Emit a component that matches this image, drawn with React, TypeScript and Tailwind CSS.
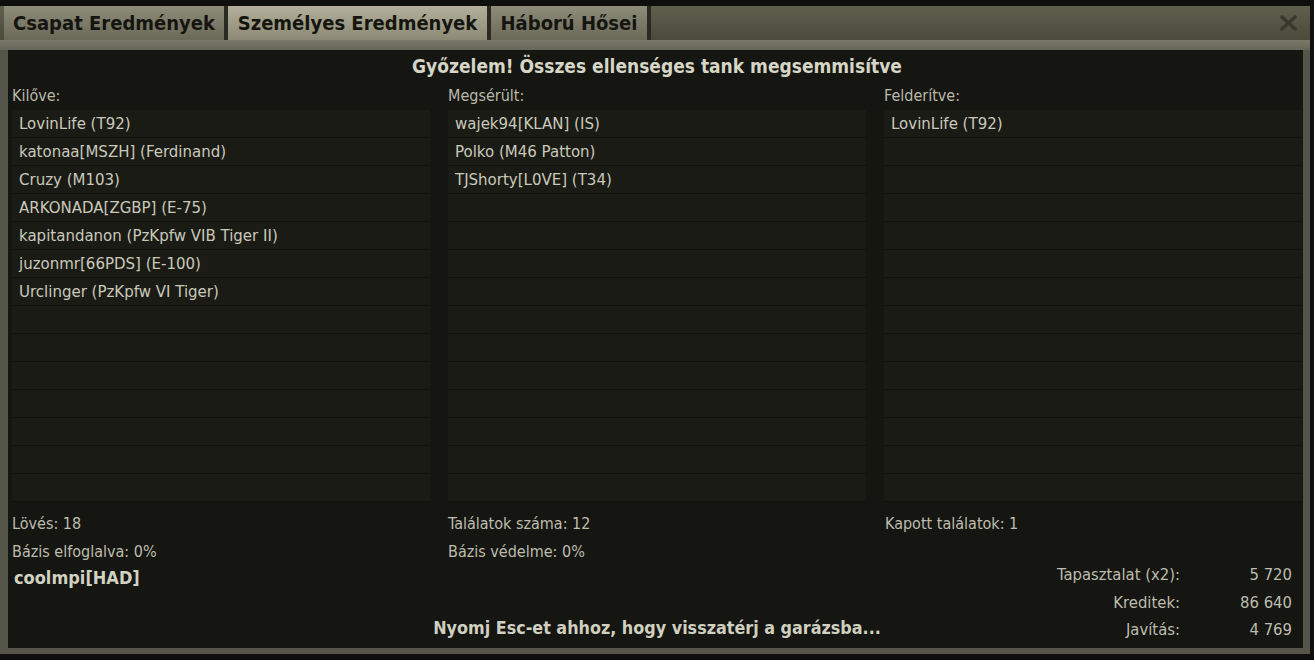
import React from "react";

const COND = '"Liberation Sans Narrow", "DejaVu Sans Condensed", "Roboto Condensed", "Arial Narrow", sans-serif';
const ROW = '"DejaVu Sans", "Liberation Sans", sans-serif';

const killed = [
  "LovinLife (T92)",
  "katonaa[MSZH] (Ferdinand)",
  "Cruzy (M103)",
  "ARKONADA[ZGBP] (E-75)",
  "kapitandanon (PzKpfw VIB Tiger II)",
  "juzonmr[66PDS] (E-100)",
  "Urclinger (PzKpfw VI Tiger)",
];
const damaged = ["wajek94[KLAN] (IS)", "Polko (M46 Patton)", "TJShorty[L0VE] (T34)"];
const spotted = ["LovinLife (T92)"];

function ListBox({ items }: { items: string[] }) {
  const rows = Array.from({ length: 14 }, (_, i) => items[i] ?? "");
  return (
    <div className="flex flex-col bg-[#121210]">
      {rows.map((t, i) => (
        <div
          key={i}
          className="h-[28px] flex items-center pl-[7px] pt-[1px] bg-[#1b1b16] border-b border-[#11110d] text-[15px] text-[#c9c9ba]"
          style={{ fontFamily: ROW }}
        >
          {t}
        </div>
      ))}
    </div>
  );
}

function Tab({ label, active, w }: { label: string; active?: boolean; w: string }) {
  return (
    <div
      className={
        "h-full flex items-center justify-center font-bold text-[20px] text-[#151510] border-r-[4px] border-[#2a2a22] " +
        w +
        " " +
        (active
          ? "bg-gradient-to-b from-[#b2b09a] to-[#8c8a76]"
          : "bg-gradient-to-b from-[#8e8d7a] to-[#6a6958]")
      }
      style={{ fontFamily: COND }}
    >
      {label}
    </div>
  );
}

export default function App() {
  return (
    <div className="w-[1314px] h-[660px] bg-[#0f0f0d] flex flex-col pt-[6px] pb-[6px] pr-[4px] overflow-hidden">
      <div className="flex-1 flex flex-col bg-[#55554a]">
        {/* tab bar */}
        <div className="h-[34px] flex items-stretch bg-gradient-to-b from-[#5f5f4e] to-[#4b4b3d] pl-[4px]">
          <Tab label="Csapat Eredmények" w="w-[224px]" />
          <Tab label="Személyes Eredmények" w="w-[263px]" active />
          <Tab label="Háború Hősei" w="w-[160px]" />
          <div className="flex-1" />
          <div className="w-[44px] flex items-center justify-center">
            <svg width="17" height="16" viewBox="0 0 17 16">
              <path d="M2 2 L15 14 M15 2 L2 14" stroke="#38382e" strokeWidth="3.5" strokeLinecap="round" />
            </svg>
          </div>
        </div>
        <div className="h-[10px] bg-gradient-to-b from-[#7a7968] to-[#67665a]" />
        {/* content */}
        <div className="flex-1 ml-[8px] mr-[7px] mb-[6px] bg-[#151511] flex flex-col pl-[4px] pr-[1px]">
          <div
            className="h-[32px] flex items-center justify-center font-bold text-[19px] text-[#d6d6c6]"
            style={{ fontFamily: COND }}
          >
            Győzelem! Összes ellenséges tank megsemmisítve
          </div>
          <div className="grid grid-cols-3 gap-x-[18px]">
            {[
              ["Kilőve:", killed],
              ["Megsérült:", damaged],
              ["Felderítve:", spotted],
            ].map(([label, items]) => (
              <div key={label as string} className="flex flex-col">
                <div className="h-[28px] flex items-center text-[16px] text-[#b9b9aa]" style={{ fontFamily: COND }}>
                  {label as string}
                </div>
                <ListBox items={items as string[]} />
              </div>
            ))}
          </div>
          <div
            className="grid grid-cols-3 gap-x-[18px] mt-[8px] text-[16px] text-[#bdbdae]"
            style={{ fontFamily: COND }}
          >
            <div className="flex flex-col">
              <div className="h-[27px] flex items-center">Lövés: 18</div>
              <div className="h-[29px] flex items-center">Bázis elfoglalva: 0%</div>
            </div>
            <div className="flex flex-col">
              <div className="h-[27px] flex items-center">Találatok száma: 12</div>
              <div className="h-[29px] flex items-center">Bázis védelme: 0%</div>
            </div>
            <div className="flex flex-col pl-[1px]">
              <div className="h-[27px] flex items-center">Kapott találatok: 1</div>
            </div>
          </div>
          <div className="flex-1 grid grid-cols-[1fr_auto_1fr]">
            <div
              className="pl-[2px] h-[26px] -mt-[2px] flex items-center font-bold text-[18px] text-[#d2d2c2]"
              style={{ fontFamily: COND }}
            >
              coolmpi[HAD]
            </div>
            <div
              className="self-end mb-[6px] font-bold text-[17.8px] text-[#d0d0c0]"
              style={{ fontFamily: COND }}
            >
              Nyomj Esc-et ahhoz, hogy visszatérj a garázsba...
            </div>
            <div
              className="flex justify-end pr-[10px] -mt-[4px] text-[16.5px] text-[#bdbdae]"
              style={{ fontFamily: COND }}
            >
              <div className="grid grid-cols-[auto_112px] auto-rows-[27.5px] items-center">
                <div className="text-right">Tapasztalat (x2):</div>
                <div className="text-right">5 720</div>
                <div className="text-right">Kreditek:</div>
                <div className="text-right">86 640</div>
                <div className="text-right">Javítás:</div>
                <div className="text-right">4 769</div>
              </div>
            </div>
          </div>
        </div>
      </div>
    </div>
  );
}
